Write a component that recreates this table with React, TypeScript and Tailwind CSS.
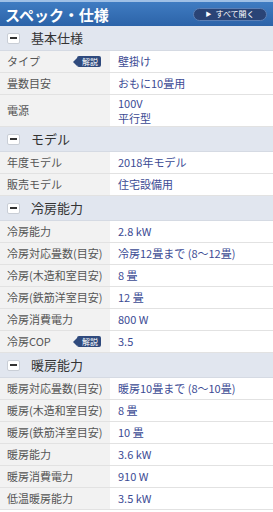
import React from "react";

type Row = { label: string; value: string[]; help?: boolean; tall?: boolean };
type Section = { title: string; rows: Row[] };

const sections: Section[] = [
  {
    title: "基本仕様",
    rows: [
      { label: "タイプ", value: ["壁掛け"], help: true },
      { label: "畳数目安", value: ["おもに10畳用"] },
      { label: "電源", value: ["100V", "平行型"], tall: true },
    ],
  },
  {
    title: "モデル",
    rows: [
      { label: "年度モデル", value: ["2018年モデル"] },
      { label: "販売モデル", value: ["住宅設備用"] },
    ],
  },
  {
    title: "冷房能力",
    rows: [
      { label: "冷房能力", value: ["2.8 kW"] },
      { label: "冷房対応畳数(目安)", value: ["冷房12畳まで (8〜12畳)"] },
      { label: "冷房(木造和室目安)", value: ["8 畳"] },
      { label: "冷房(鉄筋洋室目安)", value: ["12 畳"] },
      { label: "冷房消費電力", value: ["800 W"] },
      { label: "冷房COP", value: ["3.5"], help: true },
    ],
  },
  {
    title: "暖房能力",
    rows: [
      { label: "暖房対応畳数(目安)", value: ["暖房10畳まで (8〜10畳)"] },
      { label: "暖房(木造和室目安)", value: ["8 畳"] },
      { label: "暖房(鉄筋洋室目安)", value: ["10 畳"] },
      { label: "暖房能力", value: ["3.6 kW"] },
      { label: "暖房消費電力", value: ["910 W"] },
      { label: "低温暖房能力", value: ["3.5 kW"] },
    ],
  },
];

const HelpTag = () => (
  <span className="relative ml-auto mr-[9px] flex h-[11px] items-center rounded-[2px] bg-[#2f4a7d] pl-[5px] pr-[3px] text-[8px] leading-none text-white">
    <span className="absolute left-[-4px] top-[1.5px] h-0 w-0 border-y-[4px] border-r-[4px] border-y-transparent border-r-[#2f4a7d]" />
    解説
  </span>
);

const SectionHead = ({ title }: { title: string }) => (
  <div className="flex h-[25px] items-center border-b border-[#d5dae3] bg-[#e1e6ef] pl-[7px]">
    <span className="flex h-[11px] w-[13px] items-center justify-center rounded-[2px] border border-[#c9ced6] bg-white">
      <span className="h-[2px] w-[7px] bg-[#333]" />
    </span>
    <span className="ml-[11px] text-[13px] text-[#333]">{title}</span>
  </div>
);

const SpecRow = ({ row }: { row: Row }) => (
  <div className={`flex border-b border-[#e2e2e2] ${row.tall ? "h-[32px]" : "h-[22px]"}`}>
    <div className="flex w-[110px] shrink-0 items-center bg-[#f2f2f2] pl-[7px] text-[11px] text-[#555]">
      <span>{row.label}</span>
      {row.help && <HelpTag />}
    </div>
    <div className="flex flex-col justify-center pl-[8px] text-[11px] leading-[15px] text-[#3c4b94]">
      {row.value.map((v) => (
        <span key={v}>{v}</span>
      ))}
    </div>
  </div>
);

export default function App() {
  return (
    <div
      className="w-[273px] bg-white"
      style={{ fontFamily: '"Noto Sans CJK JP", "Noto Sans", sans-serif' }}
    >
      <div className="flex h-[26px] items-center justify-between border-t-2 border-[#9fc0e6] bg-gradient-to-b from-[#3f7cc2] to-[#2c63a8] pl-[5px] pr-[6px]">
        <span className="text-[15px] font-bold leading-none text-white">スペック・仕様</span>
        <span className="flex h-[13px] w-[74px] items-center justify-center gap-[4px] rounded-full border border-[#5b7fb5] bg-[#2a4476] text-[8px] leading-none text-white">
          <span className="text-[6px]">▶</span>
          すべて開く
        </span>
      </div>
      {sections.map((s) => (
        <div key={s.title}>
          <SectionHead title={s.title} />
          {s.rows.map((r) => (
            <SpecRow key={r.label} row={r} />
          ))}
        </div>
      ))}
    </div>
  );
}
